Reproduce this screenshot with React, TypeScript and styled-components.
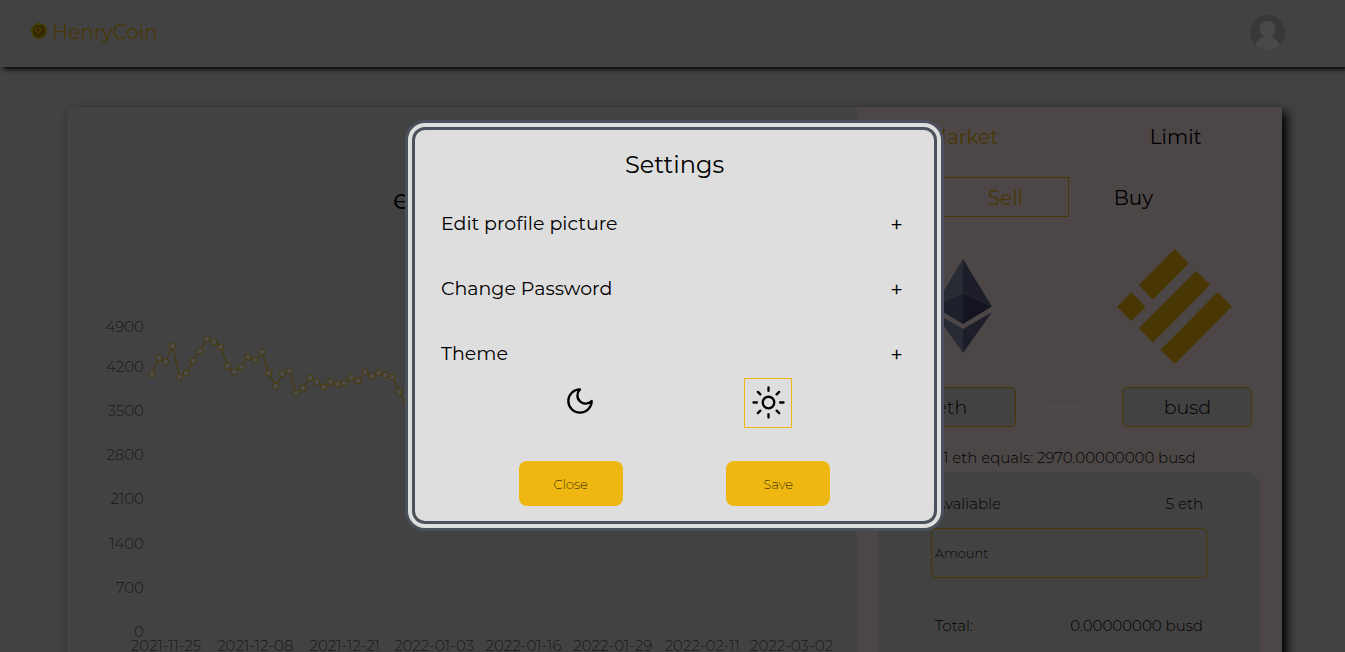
import React from "react";
import styled, { createGlobalStyle } from "styled-components";
import { IoSunnyOutline } from "react-icons/io5";

const gold = "#eeb711";
const surface = "#dedede";

const GlobalStyle = createGlobalStyle`
  * { box-sizing: border-box; }
  body {
    margin: 0;
    background: ${surface};
    color: #000;
    font-family: Montserrat, Inter, "Liberation Sans", sans-serif;
  }
  button, input { font-family: inherit; color: inherit; }
  h1, h2, p { margin: 0; font-weight: 400; }
`;

const Page = styled.div`
  display: flex;
  flex-direction: column;
  height: 100vh;
  overflow: hidden;
`;

const Header = styled.header`
  display: flex;
  flex: none;
  align-items: center;
  justify-content: space-between;
  height: 67px;
  padding: 0 60px 2px 31px;
  box-shadow: 3px 2px 5px #000;
`;

const Brand = styled.a`
  display: flex;
  align-items: center;
  gap: 5px;
  padding-bottom: 2px;
  color: ${gold};
  font-size: 20px;
  line-height: 24px;
  text-decoration: none;
`;

const AvatarButton = styled.button`
  display: flex;
  padding: 0;
  border: 0;
  background: none;
`;

const Card = styled.main`
  display: flex;
  flex: 1 0 640px;
  margin: 40px 63px 0 67px;
  box-shadow: 5px 5px 10px #000;
`;

const ChartPane = styled.section`
  flex: 65;
  min-width: 0;
`;

const PairTitle = styled.h1`
  padding-top: 74px;
  padding-left: 4px;
  font-size: 28px;
  line-height: 36px;
  text-align: center;
`;

const ChartSvg = styled.svg`
  display: block;
  width: 100%;
  margin-top: 10px;
  fill: #555;
  font-size: 15px;
  font-weight: 300;
`;

const TradePane = styled.section`
  display: flex;
  flex: 35;
  flex-direction: column;
  align-items: center;
  min-width: 0;
  background: #ffefeb;
`;

const Tabs = styled.div`
  display: flex;
  width: 100%;
  height: 60px;
`;

const Tab = styled.button<{ $active?: boolean }>`
  flex: 1;
  border: 0;
  background: none;
  color: ${(p) => (p.$active ? gold : "#000")};
  font-size: 20px;
`;

const Modes = styled.div`
  display: flex;
  width: 256px;
  height: 40px;
  margin-top: 10px;
`;

const Mode = styled(Tab)`
  padding-top: 2px;
  border: 1px solid ${(p) => (p.$active ? gold : "transparent")};
`;

const Logos = styled.div`
  display: flex;
  align-items: center;
  justify-content: space-around;
  width: 100%;
  height: 170px;
  padding: 8px 2px 0 0;
`;

const LogoCell = styled.div`
  display: flex;
  flex: 1;
  justify-content: center;
`;

const PairRow = styled.div`
  display: flex;
  align-items: center;
  justify-content: space-between;
  width: 366px;
`;

const CoinButton = styled.button`
  width: 130px;
  height: 40px;
  border: 1px solid ${gold};
  border-radius: 5px;
  background: ${surface};
  font-size: 19px;
  font-weight: 300;
`;

const Rate = styled.p`
  padding-top: 17px;
  font-size: 15px;
  font-weight: 300;
  line-height: 28px;
`;

const OrderForm = styled.form`
  flex: 1;
  align-self: stretch;
  margin: 0 22px 0 21px;
  padding: 22px 53px 0;
  border-radius: 15px 15px 0 0;
  background: ${surface};
`;

const OrderRow = styled.div`
  display: flex;
  justify-content: space-between;
  padding: 0 4px;
  font-size: 15px;
  font-weight: 300;
  line-height: 20px;
`;

const AmountInput = styled.input`
  display: block;
  width: 100%;
  height: 50px;
  margin: 14px 0 38px;
  padding: 0 3px;
  border: 1px solid ${gold};
  border-radius: 4px;
  background: none;
  font-size: 13px;
  font-weight: 300;
  &::placeholder { color: #222; opacity: 1; }
`;

const Overlay = styled.div`
  position: fixed;
  inset: 0;
  display: flex;
  align-items: center;
  justify-content: center;
  padding: 0 0 1px 4px;
  background: rgba(0, 0, 0, 0.7);
`;

const Dialog = styled.div`
  width: 539px;
  padding: 20px 0 15px;
  border: 10px double #4a505c;
  border-radius: 20px;
  background: ${surface};
`;

const DialogTitle = styled.h2`
  font-size: 24px;
  line-height: 30px;
  text-align: center;
`;

const SettingRow = styled.button`
  display: flex;
  align-items: center;
  justify-content: space-between;
  width: 100%;
  height: 25px;
  margin-top: 40px;
  padding: 0 31px 2px 26px;
  border: 0;
  background: none;
  font-size: 19px;
  line-height: 24px;
  &:first-of-type { margin-top: 32px; }
`;

const Plus = styled.span`
  padding-top: 4px;
  font-size: 22px;
`;

const Choices = styled.div`
  display: flex;
  justify-content: space-evenly;
  margin-top: 11px;
  padding-right: 1px;
`;

const ThemeButton = styled.button<{ $active?: boolean }>`
  display: flex;
  align-items: center;
  justify-content: center;
  width: 48px;
  height: 50px;
  padding: 0 0 2px;
  border: 1px solid ${(p) => (p.$active ? gold : "transparent")};
  background: none;
`;

const Actions = styled.div`
  display: flex;
  justify-content: space-evenly;
  margin-top: 33px;
`;

const ActionButton = styled.button`
  width: 104px;
  height: 45px;
  border: 0;
  border-radius: 8px;
  background: ${gold};
  font-size: 13px;
  font-weight: 200;
`;

const CoinLogo = () => (
  <svg width="16" height="18" viewBox="0 0 16 18" aria-hidden="true">
    <ellipse cx="8" cy="8" rx="8" ry="8" fill="#d8c400" />
    <ellipse cx="8" cy="8" rx="6" ry="6" fill="#b87c00" />
    <path d="M4 7c1-3 6-3 6 0 0 2-3 1-3 4M4 8l2 1" fill="none" stroke="#e8d000" strokeWidth="1.6" />
  </svg>
);

const Avatar = () => (
  <svg width="35" height="35" viewBox="0 0 35 35" aria-hidden="true">
    <circle cx="17.5" cy="17.5" r="17.5" fill="#bcbcbc" />
    <circle cx="17.5" cy="14" r="8" fill="#f4f4f4" />
    <path d="M5.5 30.200C7 25 12 21 17.500 21S28 25 29.500 30.200A17.500 17.500 0 0 1 5.500 30.200z" fill="#f4f4f4" />
  </svg>
);

const EthLogo = () => (
  <svg width="58" height="94" viewBox="251 480 174 283" aria-hidden="true">
    <path d="M338 480L251 623 338 584z" fill="#8890ab" />
    <path d="M338 480L425 623 338 584z" fill="#62668c" />
    <path d="M251 623L338 584V676z" fill="#62688f" />
    <path d="M425 623L338 584V676z" fill="#454570" />
    <path d="M251 640L338 691V763z" fill="#8890ab" />
    <path d="M425 640L338 691V763z" fill="#62668c" />
  </svg>
);

const BusdLogo = () => (
  <svg width="115" height="115" viewBox="110 56 344 344" fill="#f0b90b" aria-hidden="true">
    <path d="M283 56l42 43-108 109-42-44zM347 121l42 42-172 173-42-43zM411 185l43 43-171 172-43-43zM153 186l43 43-43 43-43-43z" />
  </svg>
);

const Arrow = () => (
  <svg width="39" height="28" viewBox="0 0 39 28" fill="none" stroke="#fafafa" strokeWidth="3" aria-hidden="true">
    <path d="M0 14h36M23 1l13 13-13 13" />
  </svg>
);

const Moon = () => (
  <svg width="26" height="28" viewBox="81 84 78 84" fill="none" stroke="#000" strokeWidth="7" strokeLinejoin="round" aria-hidden="true">
    <path d="M120 88A35 35 0 1 0 155 123C146 132 131 134 121 125C110 116 109 100 120 88z" />
  </svg>
);

const yLabels: [string, number][] = [
  ["4900", 100], ["4200", 140], ["3500", 184], ["2800", 228],
  ["2100", 272], ["1400", 317], ["700", 361], ["0", 405],
];

const xLabels = [
  "2021-11-25", "2021-12-08", "2021-12-21", "2022-01-03",
  "2022-01-16", "2022-01-29", "2022-02-11", "2022-03-02",
];

const prices = [
  146, 130, 134, 118, 149, 145, 133, 123, 111, 114, 119, 138, 144, 139, 129,
  132, 124, 145, 158, 146, 143, 165, 160, 150, 154, 159, 154, 156, 155, 150,
  153, 144, 148, 145, 147, 149, 164, 175,
];

const points = prices.map((y, i) => [85 + i * 6.87, y + 1]);

const PriceChart = () => (
  <ChartSvg viewBox="0 0 790 440" role="img" aria-label="Price history">
    {yLabels.map(([label, y]) => (
      <text key={label} x="77" y={y + 5} textAnchor="end">{label}</text>
    ))}
    {xLabels.map((label, i) => (
      <text key={label} x={99 + i * 89.4} y="424" textAnchor="middle">{label}</text>
    ))}
    <polyline points={points.map((p) => p.join(",")).join(" ")} fill="none" stroke={gold} />
    {points.map(([x, y]) => (
      <circle key={x} cx={x} cy={y} r="3" fill="#fff" stroke={gold} />
    ))}
  </ChartSvg>
);

export default function App() {
  return (
    <>
      <GlobalStyle />
      <Page>
        <Header>
          <Brand href="#"><CoinLogo />HenryCoin</Brand>
          <AvatarButton aria-label="Profile"><Avatar /></AvatarButton>
        </Header>
        <Card>
          <ChartPane>
            <PairTitle>eth / busd</PairTitle>
            <PriceChart />
          </ChartPane>
          <TradePane>
            <Tabs>
              <Tab $active>Market</Tab>
              <Tab>Limit</Tab>
            </Tabs>
            <Modes>
              <Mode $active>Sell</Mode>
              <Mode>Buy</Mode>
            </Modes>
            <Logos>
              <LogoCell><EthLogo /></LogoCell>
              <LogoCell><BusdLogo /></LogoCell>
            </Logos>
            <PairRow>
              <CoinButton>eth</CoinButton>
              <Arrow />
              <CoinButton>busd</CoinButton>
            </PairRow>
            <Rate>1 eth equals: 2970.00000000 busd</Rate>
            <OrderForm>
              <OrderRow><span>Avaliable</span><span>5 eth</span></OrderRow>
              <AmountInput aria-label="Amount" placeholder="Amount" />
              <OrderRow><span>Total:</span><span>0.00000000 busd</span></OrderRow>
            </OrderForm>
          </TradePane>
        </Card>
      </Page>
      <Overlay>
        <Dialog role="dialog" aria-modal="true" aria-labelledby="settings-title">
          <DialogTitle id="settings-title">Settings</DialogTitle>
          <SettingRow><span>Edit profile picture</span><Plus>+</Plus></SettingRow>
          <SettingRow><span>Change Password</span><Plus>+</Plus></SettingRow>
          <SettingRow><span>Theme</span><Plus>+</Plus></SettingRow>
          <Choices>
            <ThemeButton aria-label="Dark theme"><Moon /></ThemeButton>
            <ThemeButton $active aria-label="Light theme"><IoSunnyOutline size={37} /></ThemeButton>
          </Choices>
          <Actions>
            <ActionButton>Close</ActionButton>
            <ActionButton>Save</ActionButton>
          </Actions>
        </Dialog>
      </Overlay>
    </>
  );
}
